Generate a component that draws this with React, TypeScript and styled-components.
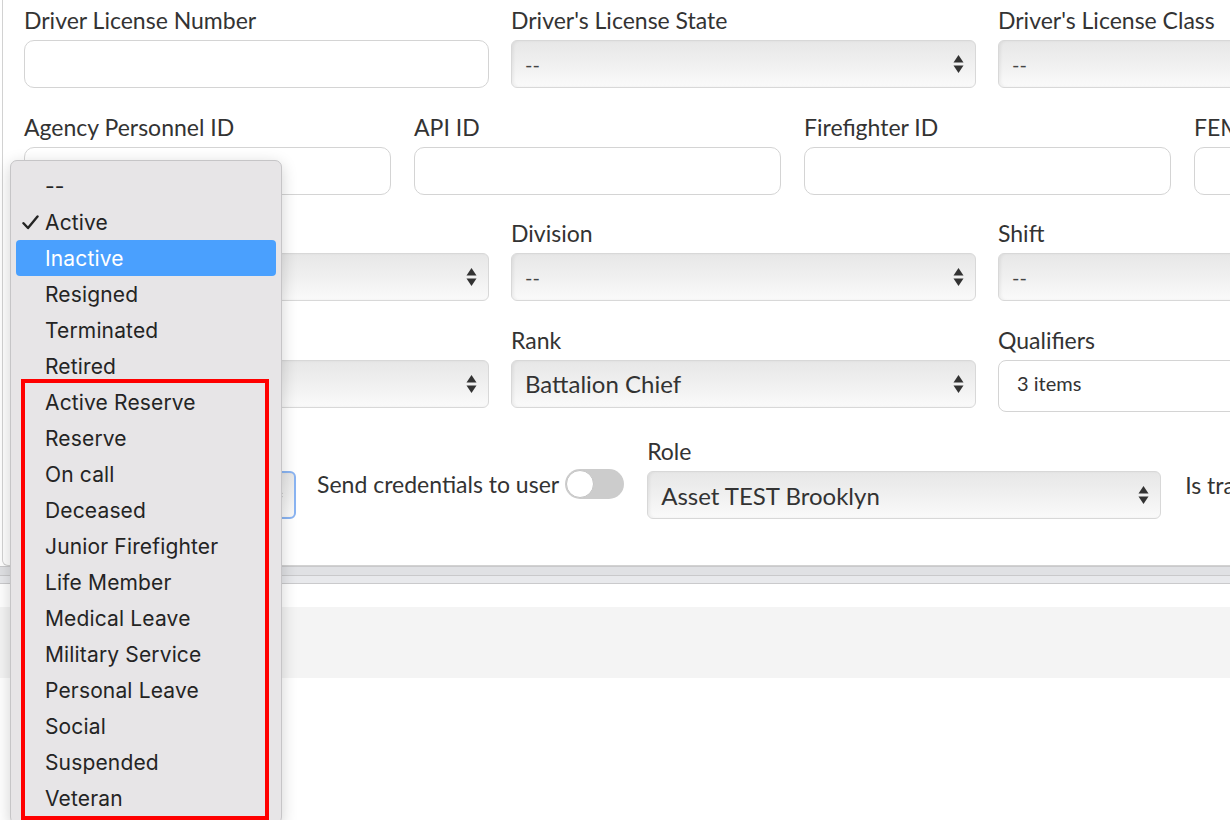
import React from 'react';
import styled, {createGlobalStyle} from 'styled-components';

const GlobalStyle = createGlobalStyle`
  html, body {
    margin: 0;
    padding: 0;
    background: #ffffff;
    overflow: hidden;
  }
  body {
    font-family: Lato, "Open Sans", sans-serif;
    color: #333333;
  }
`;

const Page = styled.div`
  position: relative;
  width: 1230px;
  height: 820px;
  overflow: hidden;
`;

const Card = styled.div`
  margin-left: 2px;
  width: 1600px;
  padding: 8px 0 46px 21px;
  border: 1px solid #d2d2d2;
  border-top: none;
  border-radius: 0 0 6px 6px;
  background: #ffffff;
`;

const Row = styled.div<{cols: number; width: number; gap: number}>`
  display: grid;
  grid-template-columns: repeat(${p => p.cols}, ${p => p.width}px);
  column-gap: ${p => p.gap}px;
  margin-bottom: 26.5px;
`;

const FlexRow = styled.div`
  display: flex;
  align-items: flex-start;
  padding-top: 1px;
`;

const Field = styled.div<{width?: number}>`
  display: flex;
  flex-direction: column;
  ${p => (p.width ? `width: ${p.width}px; flex: none;` : '')}
`;

const Label = styled.label`
  font-size: 23px;
  line-height: 24px;
  height: 24px;
  margin-bottom: 8px;
  color: #333333;
  white-space: nowrap;
`;

const TextInput = styled.div`
  height: 48px;
  box-sizing: border-box;
  border: 1px solid #d4d4d4;
  border-radius: 10px;
  background: #ffffff;
`;

const MultiBox = styled.div`
  height: 52px;
  box-sizing: border-box;
  border: 1px solid #d4d4d4;
  border-radius: 8px;
  background: #ffffff;
  padding: 0 18px 6px;
  display: flex;
  align-items: center;
  font-size: 20px;
  color: #333333;
`;

const SelectBox = styled.div<{focused?: boolean}>`
  position: relative;
  height: 48px;
  box-sizing: border-box;
  border: ${p => (p.focused ? '2px solid #8ab4f2' : '1px solid #d8d8d8')};
  border-radius: 6px;
  background: linear-gradient(to bottom, #e7e7e7 0%, #efefef 45%, #fafafa 100%);
  box-shadow: inset 2px 0 3px rgba(0, 0, 0, 0.05);
  padding: 0 40px 0 13px;
  display: flex;
  align-items: center;
  font-size: 24px;
  color: #333333;
  white-space: nowrap;
`;

const Placeholder = styled.span`
  font-size: 20px;
  color: #444444;
`;

const Arrows = styled.svg`
  position: absolute;
  right: 11px;
  top: 50%;
  transform: translateY(-50%);
`;

const SendGroup = styled.div`
  display: flex;
  align-items: center;
  margin: 30px 23px 0 21px;
  font-size: 23px;
  white-space: nowrap;
  gap: 6px;
`;

const Toggle = styled.div`
  width: 59px;
  height: 30px;
  border-radius: 15px;
  background: #cccccc;
  position: relative;
  flex: none;
`;

const Knob = styled.div`
  position: absolute;
  left: 1px;
  top: 1px;
  width: 28px;
  height: 28px;
  box-sizing: border-box;
  border-radius: 50%;
  background: #ffffff;
  border: 1px solid #c4c4c4;
`;

const TrailingText = styled.div`
  margin: 32px 0 0 24px;
  font-size: 23px;
  white-space: nowrap;
`;

const TabBand = styled.div`
  border-top: 1px solid #c9c9cb;
  border-bottom: 1px solid #cacacc;
`;

const BandStrip = styled.div<{shade: string; h: number}>`
  height: ${p => p.h}px;
  background: ${p => p.shade};
  & + & {
    border-top: 1px solid #c9c9cb;
  }
`;

const Gap = styled.div`
  height: 23px;
`;

const GraySection = styled.div`
  height: 71px;
  background: #f4f4f4;
`;

/* native-looking popup for the status select */
const Popup = styled.div`
  position: absolute;
  left: 10px;
  top: 160px;
  width: 272px;
  height: 664px;
  box-sizing: border-box;
  padding: 7px 5px;
  background: #e7e5e7;
  border: 1px solid #c6c5c7;
  border-radius: 7px;
  box-shadow: 0 4px 16px rgba(0, 0, 0, 0.18);
  font-family: Inter, "Noto Sans", sans-serif;
`;

const Option = styled.div<{highlighted?: boolean}>`
  position: relative;
  height: 36px;
  display: flex;
  align-items: center;
  padding-left: 29px;
  border-radius: 4px;
  font-size: 21px;
  letter-spacing: 0.15px;
  color: ${p => (p.highlighted ? '#ffffff' : '#242424')};
  background: ${p => (p.highlighted ? '#4aa0fe' : 'transparent')};
`;

const Check = styled.svg`
  position: absolute;
  left: 6px;
  top: 11px;
`;

const Annotation = styled.div`
  position: absolute;
  left: 10px;
  top: 218px;
  width: 248px;
  height: 441px;
  box-sizing: border-box;
  border: 4px solid #ff0000;
  pointer-events: none;
`;

const SelectArrows = () => (
  <Arrows width="11" height="20" viewBox="0 0 11 20">
    <path d="M5.5 1 L10.5 8.5 L0.5 8.5 Z" fill="#333" />
    <path d="M5.5 19 L10.5 11.5 L0.5 11.5 Z" fill="#333" />
  </Arrows>
);

const Select: React.FC<{value?: string; focused?: boolean}> = ({value, focused}) => (
  <SelectBox focused={focused}>
    {value === '--' ? <Placeholder>--</Placeholder> : value}
    <SelectArrows />
  </SelectBox>
);

const statuses = [
  '--',
  'Active',
  'Inactive',
  'Resigned',
  'Terminated',
  'Retired',
  'Active Reserve',
  'Reserve',
  'On call',
  'Deceased',
  'Junior Firefighter',
  'Life Member',
  'Medical Leave',
  'Military Service',
  'Personal Leave',
  'Social',
  'Suspended',
  'Veteran'
];

const App: React.FC = () => (
  <Page>
    <GlobalStyle />
    <Card>
      <Row cols={3} width={465} gap={22}>
        <Field>
          <Label>Driver License Number</Label>
          <TextInput />
        </Field>
        <Field>
          <Label>Driver's License State</Label>
          <Select value="--" />
        </Field>
        <Field>
          <Label>Driver's License Class</Label>
          <Select value="--" />
        </Field>
      </Row>
      <Row cols={4} width={367} gap={23}>
        <Field>
          <Label>Agency Personnel ID</Label>
          <TextInput />
        </Field>
        <Field>
          <Label>API ID</Label>
          <TextInput />
        </Field>
        <Field>
          <Label>Firefighter ID</Label>
          <TextInput />
        </Field>
        <Field>
          <Label>FEMA ID</Label>
          <TextInput />
        </Field>
      </Row>
      <Row cols={3} width={465} gap={22}>
        <Field>
          <Label>Station</Label>
          <Select value="" />
        </Field>
        <Field>
          <Label>Division</Label>
          <Select value="--" />
        </Field>
        <Field>
          <Label>Shift</Label>
          <Select value="--" />
        </Field>
      </Row>
      <Row cols={3} width={465} gap={22}>
        <Field>
          <Label>Position</Label>
          <Select value="" />
        </Field>
        <Field>
          <Label>Rank</Label>
          <Select value="Battalion Chief" />
        </Field>
        <Field>
          <Label>Qualifiers</Label>
          <MultiBox>3 items</MultiBox>
        </Field>
      </Row>
      <FlexRow>
        <Field width={272}>
          <Label>Status</Label>
          <Select value="Active" focused />
        </Field>
        <SendGroup>
          Send credentials to user
          <Toggle>
            <Knob />
          </Toggle>
        </SendGroup>
        <Field width={514}>
          <Label>Role</Label>
          <Select value="Asset TEST Brooklyn" />
        </Field>
        <TrailingText>Is training officer</TrailingText>
      </FlexRow>
    </Card>
    <TabBand>
      <BandStrip shade="#e0e1e4" h={8} />
      <BandStrip shade="#e8e9ec" h={7} />
    </TabBand>
    <Gap />
    <GraySection />

    <Popup>
      {statuses.map(s => (
        <Option key={s} highlighted={s === 'Inactive'}>
          {s === 'Active' && (
            <Check width="17" height="15" viewBox="0 0 17 15">
              <path
                d="M1.5 8.2 L6 13 L15.5 1.5"
                fill="none"
                stroke="#242424"
                strokeWidth="2.4"
                strokeLinecap="round"
                strokeLinejoin="round"
              />
            </Check>
          )}
          {s}
        </Option>
      ))}
      <Annotation />
    </Popup>
  </Page>
);

export default App;
